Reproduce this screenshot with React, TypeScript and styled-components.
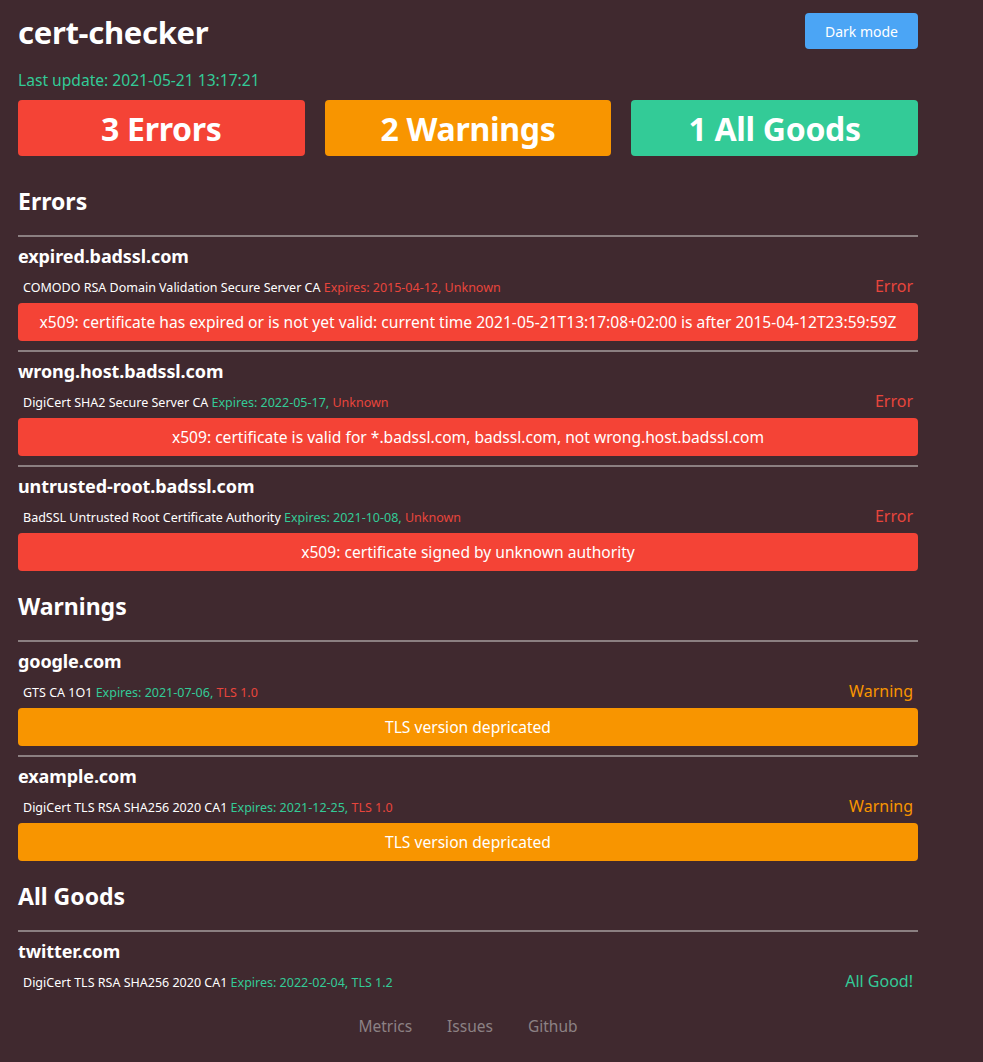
import React from "react";
import styled, { createGlobalStyle } from "styled-components";

const RED = "#f44336";
const ORANGE = "#f89500";
const GREEN = "#33cb97";
const BG = "#40292f";

const Global = createGlobalStyle`
  html, body { margin: 0; padding: 0; background: ${BG}; }
  body { font-family: "Noto Sans", "Open Sans", sans-serif; color: #fff; }
  * { box-sizing: border-box; }
`;

const Page = styled.div`
  width: 900px;
  margin-left: 18px;
  padding-top: 13px;
  padding-bottom: 20px;
`;

const Header = styled.header`
  display: flex;
  justify-content: space-between;
  align-items: flex-start;
`;

const Title = styled.h1`
  margin: 0;
  font-size: 31px;
  font-weight: 700;
  line-height: 38px;
  letter-spacing: -0.3px;
`;

const ModeButton = styled.button`
  width: 113px;
  height: 36px;
  border: none;
  border-radius: 4px;
  background: #4ba5f5;
  color: #fff;
  font-family: inherit;
  font-size: 14px;
`;

const Updated = styled.div`
  margin-top: 19px;
  color: ${GREEN};
  font-size: 15.6px;
  line-height: 20px;
`;

const Summary = styled.div`
  display: grid;
  grid-template-columns: repeat(3, 1fr);
  gap: 20px;
  margin-top: 10px;
  margin-bottom: 19px;
`;

const SummaryCard = styled.div<{ $color: string }>`
  height: 56px;
  border-radius: 4px;
  background: ${(p) => p.$color};
  display: flex;
  align-items: center;
  justify-content: center;
  font-size: 32px;
  font-weight: 700;
  letter-spacing: -0.3px;
`;

const SectionTitle = styled.h2`
  margin: 0;
  padding-top: 11px;
  height: 60px;
  font-size: 23px;
  font-weight: 700;
  line-height: 30px;
`;

const Item = styled.div`
  border-top: 2px solid #8b7f81;
  padding-top: 7px;
  padding-bottom: 9px;
`;

const Host = styled.div`
  font-size: 18px;
  font-weight: 700;
  line-height: 24px;
  letter-spacing: -0.1px;
`;

const MetaRow = styled.div`
  display: flex;
  justify-content: space-between;
  align-items: center;
  padding: 0 5px;
  margin-top: 7px;
  height: 24px;
`;

const Meta = styled.div`
  font-size: 12.5px;
`;

const Tone = styled.span<{ $color: string }>`
  color: ${(p) => p.$color};
`;

const Status = styled.div<{ $color: string }>`
  color: ${(p) => p.$color};
  font-size: 16px;
  margin-top: -2px;
`;

const Bar = styled.div<{ $color: string }>`
  margin-top: 4px;
  height: 38px;
  border-radius: 4px;
  background: ${(p) => p.$color};
  display: flex;
  align-items: center;
  justify-content: center;
  font-size: 15.6px;
`;

const Footer = styled.footer`
  display: flex;
  justify-content: center;
  gap: 35px;
  margin-top: 13px;
  line-height: 20px;
`;

const FootLink = styled.a`
  color: #8c8184;
  font-size: 15.5px;
  text-decoration: none;
`;

type Entry = {
  host: string;
  ca: string;
  expires: string;
  expOk: boolean;
  tls: string;
  tlsOk: boolean;
  status: string;
  statusColor: string;
  msg?: string;
  barColor?: string;
};

const TXT_RED = "#e8453c";

const errors: Entry[] = [
  {
    host: "expired.badssl.com",
    ca: "COMODO RSA Domain Validation Secure Server CA",
    expires: "Expires: 2015-04-12,",
    expOk: false,
    tls: "Unknown",
    tlsOk: false,
    status: "Error",
    statusColor: TXT_RED,
    msg: "x509: certificate has expired or is not yet valid: current time 2021-05-21T13:17:08+02:00 is after 2015-04-12T23:59:59Z",
    barColor: RED,
  },
  {
    host: "wrong.host.badssl.com",
    ca: "DigiCert SHA2 Secure Server CA",
    expires: "Expires: 2022-05-17,",
    expOk: true,
    tls: "Unknown",
    tlsOk: false,
    status: "Error",
    statusColor: TXT_RED,
    msg: "x509: certificate is valid for *.badssl.com, badssl.com, not wrong.host.badssl.com",
    barColor: RED,
  },
  {
    host: "untrusted-root.badssl.com",
    ca: "BadSSL Untrusted Root Certificate Authority",
    expires: "Expires: 2021-10-08,",
    expOk: true,
    tls: "Unknown",
    tlsOk: false,
    status: "Error",
    statusColor: TXT_RED,
    msg: "x509: certificate signed by unknown authority",
    barColor: RED,
  },
];

const warnings: Entry[] = [
  {
    host: "google.com",
    ca: "GTS CA 1O1",
    expires: "Expires: 2021-07-06,",
    expOk: true,
    tls: "TLS 1.0",
    tlsOk: false,
    status: "Warning",
    statusColor: ORANGE,
    msg: "TLS version depricated",
    barColor: ORANGE,
  },
  {
    host: "example.com",
    ca: "DigiCert TLS RSA SHA256 2020 CA1",
    expires: "Expires: 2021-12-25,",
    expOk: true,
    tls: "TLS 1.0",
    tlsOk: false,
    status: "Warning",
    statusColor: ORANGE,
    msg: "TLS version depricated",
    barColor: ORANGE,
  },
];

const goods: Entry[] = [
  {
    host: "twitter.com",
    ca: "DigiCert TLS RSA SHA256 2020 CA1",
    expires: "Expires: 2022-02-04,",
    expOk: true,
    tls: "TLS 1.2",
    tlsOk: true,
    status: "All Good!",
    statusColor: GREEN,
  },
];

function CertItem({ e }: { e: Entry }) {
  return (
    <Item>
      <Host>{e.host}</Host>
      <MetaRow>
        <Meta>
          {e.ca} <Tone $color={e.expOk ? GREEN : TXT_RED}>{e.expires}</Tone>{" "}
          <Tone $color={e.tlsOk ? GREEN : TXT_RED}>{e.tls}</Tone>
        </Meta>
        <Status $color={e.statusColor}>{e.status}</Status>
      </MetaRow>
      {e.msg && <Bar $color={e.barColor!}>{e.msg}</Bar>}
    </Item>
  );
}

export default function App() {
  return (
    <>
      <Global />
      <Page>
        <Header>
          <Title>cert-checker</Title>
          <ModeButton>Dark mode</ModeButton>
        </Header>
        <Updated>Last update: 2021-05-21 13:17:21</Updated>
        <Summary>
          <SummaryCard $color={RED}>3 Errors</SummaryCard>
          <SummaryCard $color={ORANGE}>2 Warnings</SummaryCard>
          <SummaryCard $color={GREEN}>1 All Goods</SummaryCard>
        </Summary>
        <SectionTitle>Errors</SectionTitle>
        {errors.map((e) => (
          <CertItem key={e.host} e={e} />
        ))}
        <SectionTitle>Warnings</SectionTitle>
        {warnings.map((e) => (
          <CertItem key={e.host} e={e} />
        ))}
        <SectionTitle>All Goods</SectionTitle>
        {goods.map((e) => (
          <CertItem key={e.host} e={e} />
        ))}
        <Footer>
          <FootLink href="#">Metrics</FootLink>
          <FootLink href="#">Issues</FootLink>
          <FootLink href="#">Github</FootLink>
        </Footer>
      </Page>
    </>
  );
}
